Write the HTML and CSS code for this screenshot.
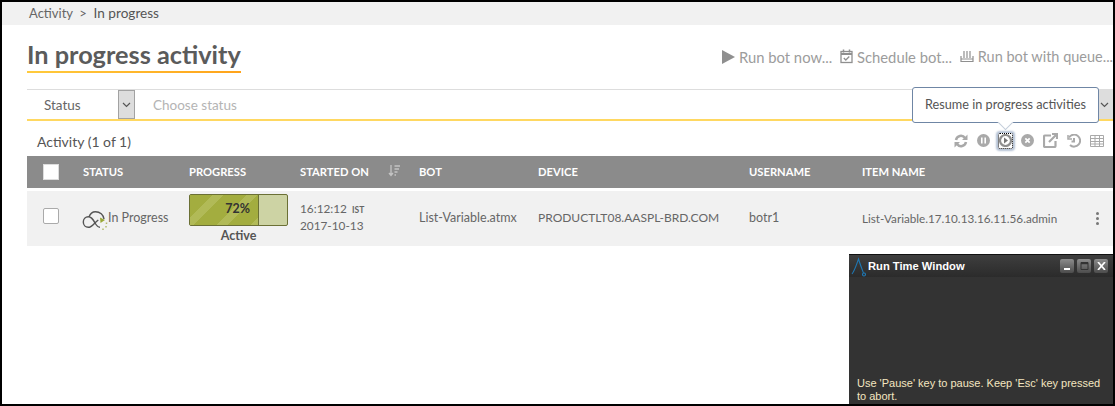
FILE: index.html
```html
<!DOCTYPE html>
<html lang="en">
<head>
  <meta charset="UTF-8">
  <title>In progress activity</title>
  <link rel="stylesheet" href="styles.css">
</head>
<body>
  <div class="frame">
    <div class="breadcrumb">Activity &nbsp;&gt;&nbsp; <span>In progress</span></div>

    <div class="main">
      <div class="title-row">
        <h1 class="title">In progress activity</h1>
        <div class="actions">
          <span class="action">
            <svg width="13" height="14" viewBox="0 0 13 14"><path d="M0 0l13 7-13 7z" fill="#8f8f8f"/></svg>
            Run bot now...
          </span>
          <span class="action">
            <svg width="13" height="15" viewBox="0 0 13 15" fill="none" stroke="#8f8f8f"><rect x="1" y="2.500" width="11" height="11" stroke-width="1.300"/><path d="M1 5h11" stroke-width="2"/><path d="M3.500 0.500v3M9.500 0.500v3" stroke-width="1.500"/><path d="M3.800 9l2 2 3.500-3.500" stroke-width="1.300"/></svg>
            Schedule bot...
          </span>
          <span class="action action-queue">
            <svg width="14" height="13" viewBox="0 0 14 13" fill="none" stroke="#8f8f8f" stroke-width="1.200"><path d="M4 1v7M7 1v7M10 1v7M1 6v5.500h12V6M1 9h12"/></svg>
            Run bot with queue...
          </span>
        </div>
      </div>

      <div class="filter">
        <div class="filter-select">Status</div>
        <div class="filter-btn"><svg width="9" height="6" viewBox="0 0 9 6" fill="none" stroke="#555" stroke-width="1.200"><path d="M1 1l3.500 3.500L8 1"/></svg></div>
        <div class="filter-input">Choose status</div>
        <div class="filter-btn filter-btn-end"><svg width="9" height="6" viewBox="0 0 9 6" fill="none" stroke="#555" stroke-width="1.200"><path d="M1 1l3.500 3.500L8 1"/></svg></div>
      </div>

      <div class="toolbar">
        <div class="count">Activity (1 of 1)</div>
        <div class="tools">
          <svg width="14" height="14" viewBox="0 0 14 14" fill="none" stroke="#a9a9a9" stroke-width="2.500"><path d="M2 6a5 5 0 0 1 9-2M12 8a5 5 0 0 1-9 2"/><path d="M13.500 .5v5.500H8z M.5 13.500V8H6z" fill="#a9a9a9" stroke="none"/></svg>
          <svg width="13" height="13" viewBox="0 0 13 13"><circle cx="6.500" cy="6.500" r="6.500" fill="#a9a9a9"/><path d="M4.800 3.500v6M8.200 3.500v6" stroke="#fff" stroke-width="1.600"/></svg>
          <span class="tool-focus"><svg width="13" height="13" viewBox="0 0 13 13"><circle cx="6.500" cy="6.500" r="5.500" fill="none" stroke="#8f8f8f" stroke-width="2.200"/><path d="M5 3.500l4 3-4 3z" fill="#777"/></svg></span>
          <svg width="13" height="13" viewBox="0 0 13 13"><circle cx="6.500" cy="6.500" r="6.500" fill="#a9a9a9"/><path d="M4.300 4.300l4.400 4.400M8.700 4.300l-4.400 4.400" stroke="#fff" stroke-width="1.700"/></svg>
          <svg width="15" height="15" viewBox="0 0 15 15" fill="none" stroke="#a9a9a9" stroke-width="2.200"><path d="M8 2.500H2a1 1 0 0 0-1 1V13a1 1 0 0 0 1 1h9.500a1 1 0 0 0 1-1V8"/><path d="M6 9l7-7M9 1h5v5"/></svg>
          <svg width="14" height="14" viewBox="0 0 14 14" fill="none" stroke="#a9a9a9" stroke-width="2"><path d="M2 3.500A6 6 0 1 1 3 11"/><path d="M1 1v4h4" stroke-width="1.500"/><path d="M7 4v3.500h-2.500"/></svg>
          <svg width="14" height="12" viewBox="0 0 14 12" fill="none" stroke="#a9a9a9"><path d="M.5.500h13v11H.500zM.5 3.500h13M.5 6.500h13M.5 9h13M5 .5v11M9.500 .5v11"/></svg>
        </div>
      </div>

      <div class="grid grid-head">
        <div><span class="head-check"></span></div>
        <div>STATUS</div>
        <div>PROGRESS</div>
        <div class="head-sort">STARTED ON
          <svg width="12" height="12" viewBox="0 0 12 12" fill="none" stroke="#c4c4c4" stroke-width="1.300"><path d="M3 0v10M1 8l2 2.500L5 8M6.500 1H12M6.500 4h4.500M6.500 7h3M6.500 10h1.500"/></svg>
        </div>
        <div>BOT</div>
        <div>DEVICE</div>
        <div>USERNAME</div>
        <div>ITEM NAME</div>
        <div></div>
      </div>

      <div class="grid grid-row">
        <div class="check-cell"><span class="row-check"></span></div>
        <div class="status-cell">
          <svg width="28" height="24" viewBox="0 0 28 24" fill="none" stroke="#555" stroke-width="1.400"><path d="M24 12C23.500 8 20 4.700 15.500 4.700 12 4.700 10 7 9 10"/><path d="M3.300 15C3.300 12 5.500 9.700 8.300 9.700 12 9.700 13.500 13 15 16 16.500 18.500 18 20.300 20 20.300"/><path d="M3.300 15C3.300 18 5.500 20.300 8.300 20.300 12 20.300 14 16 18.300 13"/><path d="M20 10.500l5 2.500-4.500 3z" fill="#9aa838" stroke="none"/><path d="M26.500 15.500v1.500M26 19v1.500M23 21.500v1.500" stroke="#b3b96b" stroke-width="1.500"/></svg>
          <span>In Progress</span>
        </div>
        <div class="progress-cell">
          <div class="bar">
            <div class="bar-fill">72%</div>
          </div>
          <div class="bar-label">Active</div>
        </div>
        <div class="started">16:12:12 <small>IST</small><br>2017-10-13</div>
        <div class="cell">List-Variable.atmx</div>
        <div class="cell cell-device">PRODUCTLT08.AASPL-BRD.COM</div>
        <div class="cell">botr1</div>
        <div class="cell cell-item">List-Variable.17.10.13.16.11.56.admin</div>
        <div class="menu-cell"><i></i><i></i><i></i></div>
      </div>
    </div>

    <div class="tooltip">Resume in progress activities</div>

    <div class="runtime">
      <div class="runtime-bar">
        <svg width="15" height="21" viewBox="0 0 15 21" fill="none" stroke="#1f78b4" stroke-width="1.100"><path d="M1 18C4 14 6 7 7.500 3c1.500 5 3.500 10 5 14"/><circle cx="13" cy="18.500" r="1.500"/></svg>
        <span class="runtime-title">Run Time Window</span>
        <div class="win-btns">
          <span class="win-btn"><svg width="8" height="8" viewBox="0 0 8 8"><path d="M1 6h6v2H1z" fill="#fff"/></svg></span>
          <span class="win-btn"><svg width="9" height="8" viewBox="0 0 9 8" fill="none" stroke="#333"><path d="M1 .5h7v7H1z"/><path d="M1 1.500h7" stroke-width="1.500"/></svg></span>
          <span class="win-btn"><svg width="9" height="8" viewBox="0 0 9 8" stroke="#fff" stroke-width="1.700"><path d="M1 0l7 8M8 0l-7 8"/></svg></span>
        </div>
      </div>
      <div class="runtime-msg">Use 'Pause' key to pause. Keep 'Esc' key pressed to abort.</div>
    </div>
  </div>
</body>
</html>
```

FILE: styles.css
```css
* {
  box-sizing: border-box;
}
html, body {
  margin: 0;
  height: 100%;
  overflow: hidden;
  background: #fff;
}
body {
  font-family: 'Lato', sans-serif;
  color: #555;
}
.frame {
  position: relative;
  height: 406px;
  border: 2px solid #000;
  overflow: hidden;
  background: #fff;
}
.breadcrumb {
  height: 23px;
  background: #f1f1f1;
  padding: 2px 0 0 27px;
  font-size: 13px;
  line-height: 18px;
  color: #666;
}
.breadcrumb span {
  color: #555;
  font-size: 13.600px;
}
.main {
  padding-left: 25px;
}
.title-row {
  display: flex;
  justify-content: space-between;
  align-items: flex-start;
  height: 64px;
  padding-top: 14px;
}
.title {
  margin: 0;
  font-size: 25.300px;
  line-height: 30px;
  font-weight: 700;
  color: #5b5b5b;
  border-bottom: 2px solid;
  border-image: linear-gradient(to right, #ffcb3d, #ffa31a) 1;
  padding-bottom: 2px;
  width: 214px;
  white-space: nowrap;
}
.actions {
  display: flex;
  gap: 8px;
  padding: 7px 0 0 0;
  font-size: 14.800px;
  line-height: 22px;
  color: #9c9c9c;
  white-space: nowrap;
}
.action svg {
  vertical-align: -1px;
}
.action-queue {
  font-size: 14.500px;
}
.filter {
  display: flex;
  height: 32px;
  border-top: 1px solid #ddd;
  border-bottom: 2px solid #ffd861;
  font-size: 13.500px;
  line-height: 31px;
}
.filter-select {
  width: 91px;
  padding-left: 17px;
  color: #666;
}
.filter-btn {
  width: 17px;
  background: #ddd;
  border: 1px solid #a2a2a2;
  display: flex;
  align-items: center;
  justify-content: center;
}
.filter-btn-end {
  border: 0;
}
.filter-input {
  flex: 1;
  padding-left: 18px;
  color: #b4b4b4;
}
.toolbar {
  display: flex;
  justify-content: space-between;
  align-items: center;
  height: 35px;
  padding: 4px 9px 0 10px;
}
.count {
  font-size: 14px;
  padding-top: 2px;
  color: #555;
}
.tools {
  display: flex;
  align-items: center;
  gap: 9px;
}
.tool-focus {
  display: flex;
  align-items: center;
  justify-content: center;
  width: 15px;
  height: 16px;
  margin: 0 -1px;
  border: 1px dotted #000;
  box-shadow: 0 0 2px 2px #b4c1d4;
  border-radius: 2px;
}
.tool-focus svg {
  flex: none;
}
.grid {
  display: grid;
  grid-template-columns: 56px 106px 111px 119px 119px 211px 113px 222px 1fr;
  align-items: center;
}
.grid-head {
  height: 32px;
  padding-bottom: 2px;
  background: #8b8b8b;
  color: #fff;
  font-size: 11.200px;
  font-weight: 700;
}
.head-sort {
  display: flex;
  align-items: center;
  gap: 19px;
}
.head-check {
  display: block;
  width: 16px;
  height: 16px;
  margin: 2px 0 0 16px;
  background: #fff;
  border: 1px solid #ddd;
}
.grid-row {
  height: 55px;
  margin-top: 3px;
  background: #f1f1f1;
  font-size: 12.500px;
  color: #666;
  white-space: nowrap;
}
.cell {
  padding-bottom: 2px;
}
.cell-device {
  font-size: 12px;
}
.cell-item {
  font-size: 11.700px;
}
.check-cell {
  padding-bottom: 6px;
}
.row-check {
  display: block;
  width: 16px;
  height: 16px;
  margin-left: 16px;
  background: #fff;
  border: 1px solid #aaa;
  border-radius: 2px;
}
.status-cell {
  display: flex;
  align-items: flex-start;
  height: 100%;
  padding-top: 16px;
  font-size: 12.500px;
}
.status-cell svg {
  margin-left: -3px;
  flex: none;
}
.status-cell span {
  margin-top: 3px;
}
.progress-cell {
  padding-top: 3px;
  height: 100%;
}
.bar {
  width: 99px;
  height: 32px;
  background: #cdd3a4;
  border: 1px solid #6b7035;
  border-radius: 2px;
}
.bar-fill {
  width: 69px;
  height: 100%;
  border-right: 1px solid #6b7035;
  background: repeating-linear-gradient(135deg, #a3ad3f 0 16px, #b1ba57 16px 24px);
  color: #333;
  font-size: 12.500px;
  font-weight: 700;
  line-height: 28px;
  text-align: right;
  padding-right: 8px;
}
.bar-label {
  width: 99px;
  margin-top: 2px;
  text-align: center;
  font-size: 12.500px;
  font-weight: 700;
  line-height: 16px;
  color: #555;
}
.started {
  font-size: 11.800px;
  line-height: 16px;
  padding-bottom: 2px;
}
.started small {
  font-size: 8.500px;
  font-weight: 700;
  margin-left: 2px;
}
.menu-cell {
  display: flex;
  flex-direction: column;
  align-items: center;
  gap: 2px;
  padding: 0 2px 0 0;
}
.menu-cell i {
  width: 3px;
  height: 3px;
  background: #777;
  border-radius: 50%;
}
.tooltip {
  position: absolute;
  left: 910px;
  top: 85px;
  width: 187px;
  height: 36px;
  background: #fff;
  border: 1px solid #6f86a5;
  border-radius: 3px;
  font-size: 12.700px;
  line-height: 32px;
  text-align: center;
  color: #555;
}
.tooltip::after {
  content: "";
  position: absolute;
  left: 87px;
  bottom: -6px;
  width: 10px;
  height: 10px;
  background: #fff;
  border: solid #c4cedb;
  border-width: 0 1px 1px 0;
  transform: rotate(45deg);
}
.runtime {
  position: absolute;
  left: 847px;
  top: 252px;
  width: 264px;
  height: 150px;
  background: #333;
  font-family: 'Liberation Sans', sans-serif;
  display: flex;
  flex-direction: column;
  justify-content: space-between;
}
.runtime-bar {
  display: flex;
  align-items: center;
  height: 23px;
  padding: 0 5px 0 2px;
  background: linear-gradient(#3e3e3e, #2b2b2b);
  border-top: 1px solid #111;
}
.runtime-title {
  flex: 1;
  margin-left: 2px;
  color: #fff;
  font-size: 11.200px;
  font-weight: 700;
}
.win-btns {
  display: flex;
  gap: 3px;
}
.win-btn {
  display: flex;
  align-items: center;
  justify-content: center;
  width: 14px;
  height: 14px;
  background: linear-gradient(#8c8c8c, #4c4c4c);
  border-radius: 2px;
}
.runtime-msg {
  padding: 0 8px 1px 8px;
  color: #f3e6c0;
  font-size: 11px;
  line-height: 13px;
}
```
